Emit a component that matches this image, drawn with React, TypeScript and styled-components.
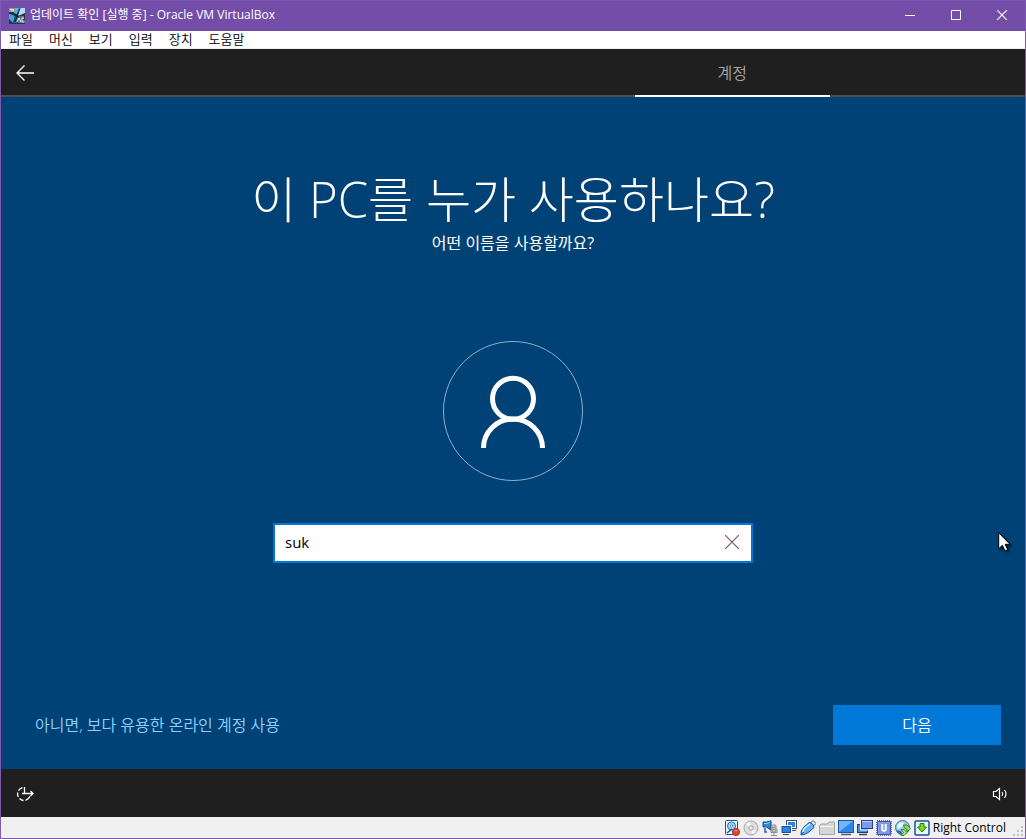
import React, { useState } from "react";
import styled, { createGlobalStyle } from "styled-components";

const GlobalStyle = createGlobalStyle`
  *, *::before, *::after { box-sizing: border-box; }
  body {
    margin: 0;
    font-family: "Open Sans", "Noto Sans CJK KR", sans-serif;
  }
  button, input { font-family: inherit; }
`;

const Window = styled.div`
  display: flex;
  flex-direction: column;
  min-height: 100vh;
  border: 1px solid #7f58b0;
  background: #004275;
`;

const TitleBar = styled.header`
  display: flex;
  align-items: center;
  height: 30px;
  padding-left: 8px;
  background: #744da9;
`;

const WindowTitle = styled.h1`
  flex: 1;
  margin: 0 0 2px 5px;
  color: #fff;
  font-size: 12px;
  font-weight: 400;
  line-height: 18px;
`;

const WindowButton = styled.button`
  display: grid;
  place-items: center;
  align-self: flex-start;
  width: 46px;
  height: 28px;
  padding: 0;
  border: 0;
  background: transparent;
`;

const MenuBar = styled.nav`
  display: flex;
  align-items: flex-start;
  gap: 16px;
  height: 18px;
  padding-left: 8px;
  border-bottom: 1px solid #f0f0f0;
  background: #fff;
`;

const MenuItem = styled.button`
  padding: 0;
  border: 0;
  background: transparent;
  color: #000;
  font-size: 13px;
  font-weight: 350;
  line-height: 16px;
`;

const StepBar = styled.div`
  display: flex;
  height: 48px;
  background: #1f1f1f;
`;

const BackButton = styled.button`
  display: grid;
  place-items: center;
  width: 48px;
  padding: 2px 0 0;
  border: 0;
  border-bottom: 2px solid #4c4c4c;
  background: transparent;
`;

const Steps = styled.ol`
  display: grid;
  flex: 1;
  grid-template-columns: repeat(5, 1fr);
  margin: 0;
  padding: 0;
  list-style: none;
`;

const Step = styled.li<{ $active?: boolean }>`
  padding-top: 2px;
  border-bottom: 2px solid ${(p) => (p.$active ? "#fff" : "#4c4c4c")};
  color: #a6a6a6;
  font-size: 16px;
  font-weight: 350;
  line-height: 44px;
  text-align: center;
`;

const Main = styled.main`
  position: relative;
  display: flex;
  flex: 1;
  flex-direction: column;
  align-items: center;
  padding: 70px 24px 24px;
`;

const Heading = styled.h2`
  margin: 0;
  color: #fff;
  font-size: 49px;
  font-weight: 300;
  line-height: 64px;
  white-space: nowrap;
`;

const Subheading = styled.p`
  margin: 0;
  color: #fff;
  font-size: 16px;
  line-height: 24px;
`;

const Avatar = styled.svg`
  flex: none;
  margin: 86px 0 42px;
`;

const NameField = styled.label`
  display: flex;
  width: 480px;
  max-width: 100%;
  height: 40px;
  border: 2px solid #0078d7;
  background: #fff;
`;

const NameInput = styled.input`
  flex: 1;
  min-width: 0;
  padding: 0 10px 2px;
  border: 0;
  outline: 0;
  background: transparent;
  color: #000;
  font-size: 15px;
`;

const ClearButton = styled.button`
  display: grid;
  place-items: center;
  width: 38px;
  padding: 0 0 2px;
  border: 0;
  background: transparent;
`;

const Actions = styled.div`
  display: flex;
  align-items: center;
  justify-content: space-between;
  align-self: stretch;
  margin-top: auto;
`;

const AccountLink = styled.a`
  margin-left: 10px;
  color: #8fd0ff;
  font-size: 16px;
  font-weight: 350;
  line-height: 24px;
  text-decoration: none;
`;

const NextButton = styled.button`
  width: 168px;
  height: 40px;
  padding: 0 0 2px;
  border: 0;
  background: #0078d7;
  color: #fff;
  font-size: 16px;
  font-weight: 350;
`;

const Pointer = styled.svg`
  position: absolute;
  top: 435px;
  right: 11px;
  filter: drop-shadow(2px 2px 1px rgba(0, 0, 0, 0.5));
`;

const SystemBar = styled.div`
  display: flex;
  align-items: center;
  justify-content: space-between;
  height: 48px;
  background: #1f1f1f;
`;

const SystemButton = styled.button`
  display: grid;
  place-items: center;
  width: 48px;
  height: 48px;
  padding: 2px 0 0;
  border: 0;
  background: transparent;
`;

const StatusBar = styled.footer`
  display: flex;
  align-items: center;
  justify-content: flex-end;
  gap: 3px;
  height: 21px;
  background: #f0f0f0;
`;

const StatusIcon = styled.svg`
  flex: none;
  width: 16px;
  height: 16px;
`;

const HostKey = styled.span`
  margin-right: 3px;
  color: #000;
  font-family: "Open Sans", sans-serif;
  font-size: 12px;
  line-height: 20px;
`;

const Grip = styled.svg`
  align-self: flex-end;
`;

const MENUS = ["파일", "머신", "보기", "입력", "장치", "도움말"];

function AppIcon() {
  return (
    <svg width="16" height="16" viewBox="0 0 16 16" aria-hidden="true">
      <rect width="16" height="16" fill="#2b3440" />
      <path d="M6 0h4L8 6 5 5z" fill="#54b4e8" />
      <path d="M10 0h6v5l-7 3z" fill="#a9dcf5" />
      <path d="M0 5l6 2-2 8-4-4z" fill="#3fa3e0" />
      <path d="M7 8l4-1-3 8H5z" fill="#1c6fb0" />
      <path d="M0 0h6v4H0z" fill="#8b97a3" />
      <path d="M1 1.500h4M2 3h3" stroke="#e8edf2" />
      <path d="M8 10l3-2h4v3l-3 1h4v3H9z" fill="#67727e" />
      <path d="M8 14l2-4 2 4M15 10h-2v4h2" fill="none" stroke="#e6edf4" />
      <path d="M11 0L6 14M0 5l10 4" stroke="#101820" />
    </svg>
  );
}

function DevicesIcons() {
  return (
    <>
      <StatusIcon viewBox="0 0 16 16">
        <rect x="1.500" y=".5" width="12" height="14" rx="1" fill="#e8f4ff" stroke="#1552a0" />
        <circle cx="7.500" cy="6" r="4" fill="#a9d4fa" stroke="#2a6db8" />
        <circle cx="7.500" cy="6" r="1.200" fill="#fff" stroke="#2a6db8" strokeWidth=".7" />
        <path d="M3 13l5-4" stroke="#1552a0" strokeWidth="1.500" />
        <circle cx="12" cy="12" r="3.500" fill="#e34424" stroke="#b22a12" />
        <path d="M10.500 11q1.500-1.500 3 0" stroke="#ffb49c" fill="none" />
      </StatusIcon>
      <StatusIcon viewBox="0 0 16 16">
        <circle cx="8" cy="8" r="7" fill="#dedede" stroke="#a5a5a5" />
        <path d="M8 8L3 4a6 6 0 0 1 4-2zM8 8l5 4a6 6 0 0 1-4 2z" fill="#f8f8f8" />
        <circle cx="8" cy="8" r="2.200" fill="#f0f0f0" stroke="#a0a0a0" />
      </StatusIcon>
      <StatusIcon viewBox="0 0 16 16">
        <path d="M1 2h3.500L9 .8v9.400L4.500 7H1z" fill="#2f86dc" stroke="#114a92" />
        <path d="M2 3.500h3l3-1.500" fill="none" stroke="#9bd0ff" />
        <path d="M3 8v4h2" fill="none" stroke="#1d62b4" strokeWidth="1.500" />
        <rect x="10" y="5" width="4" height="7" rx="1" fill="#c9c9c9" stroke="#8d8d8d" />
        <path d="M10.500 7.500h3M10.500 9.500h3" stroke="#8d8d8d" />
        <path d="M9 9v3.500h6V9M12 13v2M9 15.500h6" fill="none" stroke="#8d8d8d" />
      </StatusIcon>
      <StatusIcon viewBox="0 0 16 16">
        <rect x="6.500" y="1.500" width="8" height="6" fill="#2d83e4" stroke="#fff" />
        <rect x="5.500" y=".5" width="10" height="8" fill="none" stroke="#444e5a" />
        <path d="M11 10.500h4" stroke="#555" />
        <rect x="0" y="5" width="11" height="9" fill="#fff" />
        <rect x="1" y="6.500" width="8.500" height="6" fill="#2d83e4" stroke="#1750a8" />
        <path d="M2 14.500h6" stroke="#444" />
      </StatusIcon>
      <StatusIcon viewBox="0 0 16 16">
        <path d="M10.500 3l2.500-2.500 3 3L13.500 6z" fill="#eee" stroke="#555" />
        <path d="M1 15q-1-4 3-8l5-4.500q4 0 5 5L9 12q-4 3-8 3z" fill="#6bb4f4" stroke="#1657ab" />
        <path d="M3 12q0-3 3-5l4-3" fill="none" stroke="#d8efff" strokeWidth="1.500" />
        <path d="M1 15l3-3" stroke="#1657ab" />
      </StatusIcon>
      <StatusIcon viewBox="0 0 16 16">
        <path d="M.5 14.500v-9L2 4h6l2-2h5.500v12.500z" fill="#d6d6d6" stroke="#a4a4a4" />
        <path d="M1.500 6.500h13" stroke="#f5f5f5" />
      </StatusIcon>
      <StatusIcon viewBox="0 0 16 16">
        <rect x=".5" y=".5" width="15" height="12" fill="#2e86e8" stroke="#1b55a5" />
        <path d="M1 1h14L1 12z" fill="#6fb6fa" />
        <path d="M3 14.500h10" stroke="#555f6c" strokeWidth="1.500" />
      </StatusIcon>
      <StatusIcon viewBox="0 0 16 16">
        <rect x=".5" y="4.500" width="10" height="8" fill="#3f92ec" stroke="#183f8a" />
        <path d="M3.500 3v7H12" fill="none" stroke="#fff" />
        <rect x="4.500" y=".5" width="11" height="8" fill="#8199ea" stroke="#293f9c" />
        <path d="M5 1.500h10" stroke="#c5d1ff" />
        <path d="M2 14.500h8" stroke="#444" strokeWidth="1.500" />
      </StatusIcon>
      <StatusIcon viewBox="0 0 16 16">
        <rect x="1" y="1" width="14" height="14" fill="none" stroke="#5a70c4" strokeWidth="2" strokeDasharray="1 1" />
        <rect x="1.500" y="1.500" width="13" height="13" rx="1" fill="#7f96e4" stroke="#3c52b0" />
        <path d="M6 4v5q0 2 2 2t2-2V4" fill="#a9b9f2" stroke="#fff" strokeWidth="1.500" />
      </StatusIcon>
      <StatusIcon viewBox="0 0 16 16">
        <circle cx="7.500" cy="7.500" r="7" fill="#9bcdf3" stroke="#3474ad" />
        <path d="M2 5l4-3 3 1-2 4-4 2z" fill="#edf7ff" />
        <path d="M1 10q2 5 7 5l-2-4z" fill="#286fb1" />
        <path d="M8.500 5H12l3.500 3.500L12 12v-2.500L9.500 8z" fill="#8be33e" stroke="#28701a" strokeWidth=".8" />
        <path d="M6 9.500h3l3 3-3 3H6l2.500-3z" fill="#a9ee58" stroke="#28701a" strokeWidth=".8" />
      </StatusIcon>
      <StatusIcon viewBox="0 0 16 16">
        <rect x="1" y="1" width="14" height="14" rx="1" fill="#e9f5ff" stroke="#155297" strokeWidth="1.500" />
        <path d="M6 3.500h4V7h2.500L8 12 3.500 7H6z" fill="#76df18" stroke="#287c0a" />
      </StatusIcon>
    </>
  );
}

export default function App() {
  const [name, setName] = useState("suk");

  return (
    <>
      <GlobalStyle />
      <Window>
        <TitleBar>
          <AppIcon />
          <WindowTitle>업데이트 확인 [실행 중] - Oracle VM VirtualBox</WindowTitle>
          <WindowButton aria-label="최소화">
            <svg width="10" height="10" viewBox="0 0 10 10">
              <path d="M0 5.500h10" stroke="#fff" />
            </svg>
          </WindowButton>
          <WindowButton aria-label="최대화">
            <svg width="10" height="10" viewBox="0 0 10 10">
              <path d="M.5.5h9v9h-9z" fill="none" stroke="#fff" />
            </svg>
          </WindowButton>
          <WindowButton aria-label="닫기">
            <svg width="10" height="10" viewBox="0 0 10 10">
              <path d="M0 0l10 10M10 0L0 10" stroke="#fff" strokeWidth="1.200" />
            </svg>
          </WindowButton>
        </TitleBar>

        <MenuBar>
          {MENUS.map((menu) => (
            <MenuItem key={menu}>{menu}</MenuItem>
          ))}
        </MenuBar>

        <StepBar>
          <BackButton aria-label="뒤로">
            <svg width="18" height="16" viewBox="0 0 18 16" fill="none" stroke="#fff" strokeWidth="1.300">
              <path d="M18 8H1M8.500.5L1 8l7.500 7.500" />
            </svg>
          </BackButton>
          <Steps>
            <Step />
            <Step />
            <Step />
            <Step $active>계정</Step>
            <Step />
          </Steps>
        </StepBar>

        <Main>
          <Heading>이 PC를 누가 사용하나요?</Heading>
          <Subheading>어떤 이름을 사용할까요?</Subheading>
          <Avatar width="140" height="140" viewBox="0 0 140 140" fill="none" stroke="#fff" aria-hidden="true">
            <circle cx="70" cy="70" r="69.500" stroke="#8fb0c9" />
            <circle cx="70" cy="57.700" r="20.500" strokeWidth="5" />
            <path d="M40.500 107a29.500 29 0 0 1 59 0" strokeWidth="5" />
          </Avatar>
          <NameField>
            <NameInput
              type="text"
              aria-label="이름"
              value={name}
              onChange={(e) => setName(e.target.value)}
            />
            <ClearButton aria-label="지우기" onClick={() => setName("")}>
              <svg width="14" height="14" viewBox="0 0 14 14">
                <path d="M0 0l14 14M14 0L0 14" stroke="#7a5a60" strokeWidth="1.200" />
              </svg>
            </ClearButton>
          </NameField>
          <Actions>
            <AccountLink href="#online">아니면, 보다 유용한 온라인 계정 사용</AccountLink>
            <NextButton>다음</NextButton>
          </Actions>
          <Pointer width="16" height="20" viewBox="0 0 16 20" aria-hidden="true">
            <path d="M.7.8v16l3.700-3.500 2.600 5.700 2.700-1.200-2.500-5.500h4.800z" fill="#fff" stroke="#000" />
          </Pointer>
        </Main>

        <SystemBar>
          <SystemButton aria-label="접근성">
            <svg width="18" height="18" viewBox="0 0 18 18" fill="none" stroke="#fff" strokeWidth="1.300">
              <path d="M6.500 2.700a6.500 6.500 0 0 0-4 3M1.700 7.500a6.500 6.500 0 0 0 .6 4.500M3.500 13.500a6.500 6.500 0 0 0 4 2M9.500 15.300a6.500 6.500 0 0 0 4.500-4" />
              <path d="M8.500 2v6.500M6 8.500h11M14.500 6l2.500 2.500-2.500 2.500" />
            </svg>
          </SystemButton>
          <SystemButton aria-label="볼륨">
            <svg width="18" height="14" viewBox="0 0 18 14" fill="none" stroke="#fff" strokeWidth="1.200">
              <path d="M1.500 4.500h2.500L7.500 1.500v11L4 9.500H1.500z" />
              <path d="M10 5q1.500 2 0 4M12.500 3q3 4 0 8" />
            </svg>
          </SystemButton>
        </SystemBar>

        <StatusBar>
          <DevicesIcons />
          <HostKey>Right Control</HostKey>
          <Grip width="13" height="13" viewBox="0 0 13 13" fill="#bfbfbf" aria-hidden="true">
            <path d="M9 1h2v2H9zM5 5h2v2H5zM9 5h2v2H9zM1 9h2v2H1zM5 9h2v2H5zM9 9h2v2H9z" />
          </Grip>
        </StatusBar>
      </Window>
    </>
  );
}
